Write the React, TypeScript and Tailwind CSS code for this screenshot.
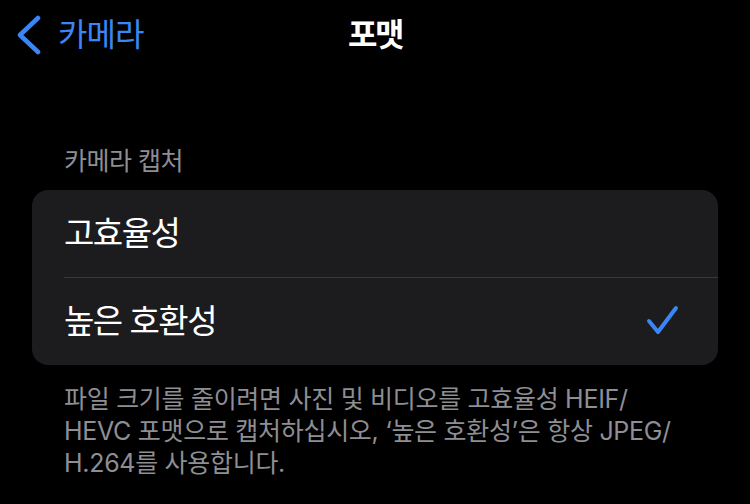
import { Fragment } from "react";

const FONT = "font-['Inter','Noto_Sans_CJK_KR',sans-serif]";

const options = [
  { id: "hevc", label: "고효율성", selected: false },
  { id: "jpeg", label: "높은 호환성", selected: true },
];

function BackChevron() {
  return (
    <svg width="28" height="40" viewBox="0 0 28 40" fill="none">
      <polyline
        points="22,3 4,20 22,37"
        stroke="#3a86f7"
        strokeWidth="4.5"
        strokeLinecap="round"
        strokeLinejoin="round"
      />
    </svg>
  );
}

function Check() {
  return (
    <svg width="34" height="34" viewBox="0 0 34 34" fill="none">
      <polyline
        points="3,16 12,27 30,3"
        stroke="#3a86f7"
        strokeWidth="4"
        strokeLinecap="round"
        strokeLinejoin="round"
      />
    </svg>
  );
}

export default function App() {
  return (
    <div className={`h-[504px] w-[750px] overflow-hidden bg-black ${FONT}`}>
      {/* nav bar */}
      <div className="grid h-[70px] grid-cols-[1fr_auto_1fr] items-center">
        <div className="flex items-center gap-[14px] pl-[16px]">
          <BackChevron />
          <span className="text-[32px] leading-none tracking-[-1px] text-[#3a86f7]">카메라</span>
        </div>
        <h1 className="text-[32px] font-bold leading-none tracking-[-2.5px] text-white">포맷</h1>
        <div />
      </div>

      <div className="pt-[76px]">
        <p className="pl-[64px] text-[25px] leading-[30px] tracking-[-0.5px] text-[#8e8e93]">카메라 캡처</p>

        <div className="mx-[32px] mt-[14px] overflow-hidden rounded-[16px] bg-[#1c1c1e]">
          {options.map((opt, i) => (
            <Fragment key={opt.id}>
              {i > 0 && <div className="ml-[32px] h-px bg-[#38383a]" />}
              <div className="flex h-[87px] items-center justify-between pl-[32px] pr-[38px]">
                <span className="text-[33px] leading-none tracking-[-1.5px] text-white">{opt.label}</span>
                {opt.selected && <Check />}
              </div>
            </Fragment>
          ))}
        </div>

        <p className="mt-[18px] pl-[64px] pr-[20px] text-[25px] leading-[32px] tracking-[-0.3px] text-[#8e8e93]">
          파일 크기를 줄이려면 사진 및 비디오를 고효율성 HEIF/
          <br />
          HEVC 포맷으로 캡처하십시오, ‘높은 호환성’은 항상 JPEG/
          <br />
          H.264를 사용합니다.
        </p>
      </div>
    </div>
  );
}
